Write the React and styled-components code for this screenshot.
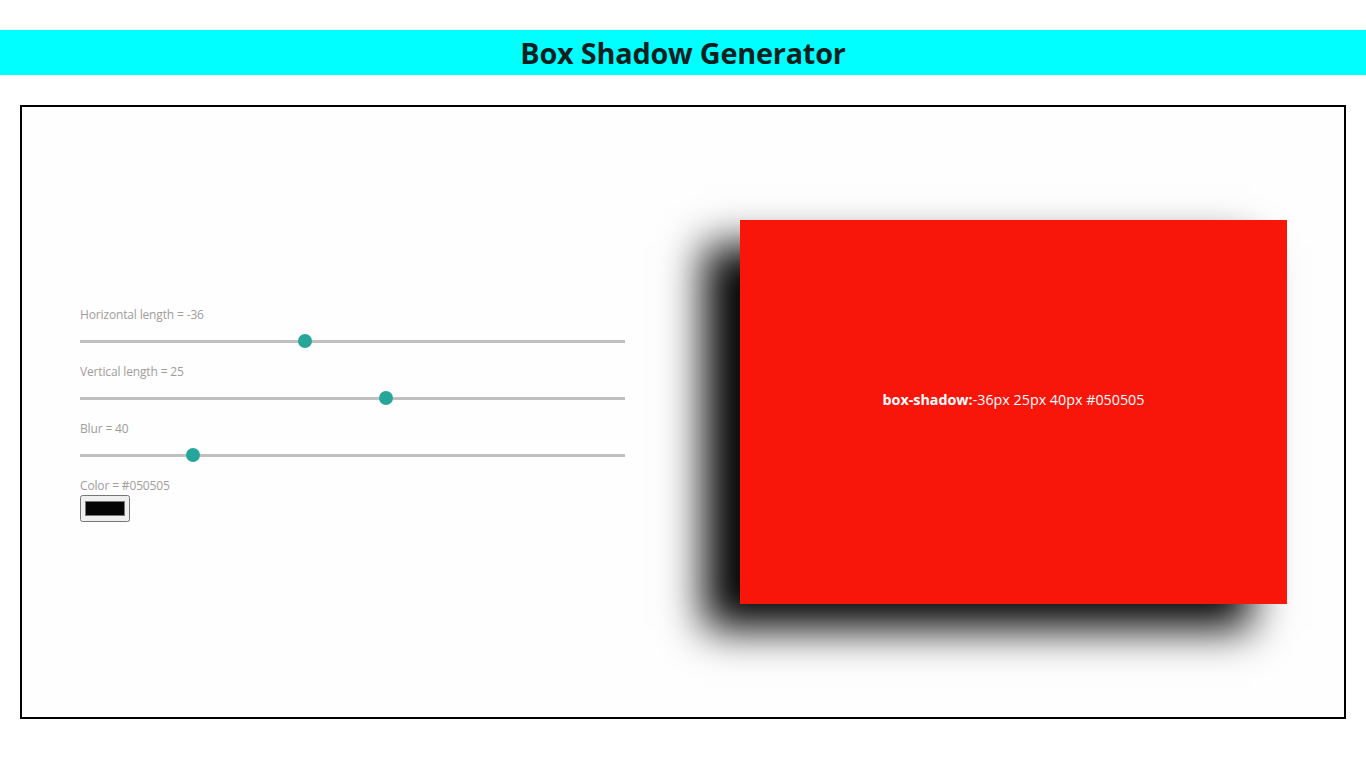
import React, { useState } from "react";
import styled, { createGlobalStyle } from "styled-components";

const Global = createGlobalStyle`
  html, body { margin: 0; padding: 0; background: #fff; }
  body { font-family: "Open Sans", "Noto Sans", sans-serif; }
  * { box-sizing: border-box; }
`;

const Page = styled.div`
  padding-top: 30px;
  display: flex;
  flex-direction: column;
  gap: 30px;
`;

const Header = styled.h1`
  margin: 0;
  height: 45px;
  background: #00ffff;
  color: #10201f;
  font-size: 28.8px;
  font-weight: 700;
  display: flex;
  align-items: center;
  justify-content: center;
  letter-spacing: -0.2px;
`;

const Frame = styled.div`
  margin: 0 20px;
  height: 614px;
  border: 2px solid #000;
  background: #fefefe;
  display: grid;
  grid-template-columns: 1fr 1fr;
  align-items: center;
`;

const Controls = styled.div`
  padding: 5px 58px 0 58px;
  display: flex;
  flex-direction: column;
`;

const Field = styled.div`
  display: flex;
  flex-direction: column;
  margin-bottom: ${(p) => (p.$last ? 0 : "7px")};
`;

const Label = styled.label`
  font-size: 12px;
  color: #a09d9b;
  line-height: 16px;
  letter-spacing: -0.15px;
`;

const Range = styled.input`
  -webkit-appearance: none;
  appearance: none;
  width: 545px;
  height: 14px;
  margin: 11px 0 9px;
  background: transparent;
  outline: none;

  &::-webkit-slider-runnable-track {
    height: 3px;
    background: #c0c0c0;
    border: none;
  }
  &::-webkit-slider-thumb {
    -webkit-appearance: none;
    width: 14px;
    height: 14px;
    border-radius: 50%;
    background: #26a69a;
    border: none;
    margin-top: -5.5px;
  }
`;

const ColorInput = styled.input`
  width: 50px;
  height: 27px;
  margin: 1px 0 0;
`;

const PreviewCol = styled.div`
  display: flex;
  justify-content: flex-end;
  padding-right: 57px;
`;

const Preview = styled.div`
  width: 547px;
  height: 384px;
  background: #f8160a;
  color: #fff;
  font-size: 14.3px;
  display: flex;
  align-items: center;
  justify-content: center;
  padding-bottom: 25px;
`;

export default function App() {
  const [h, setH] = useState(-36);
  const [v, setV] = useState(25);
  const [b, setB] = useState(40);
  const [c, setC] = useState("#050505");
  const shadow = `${h}px ${v}px ${b}px ${c}`;
  return (
    <>
      <Global />
      <Page>
        <Header>Box Shadow Generator</Header>
        <Frame>
          <Controls>
            <Field>
              <Label>Horizontal length = {h}</Label>
              <Range type="range" min={-200} max={200} value={h} onChange={(e) => setH(+e.target.value)} />
            </Field>
            <Field>
              <Label>Vertical length = {v}</Label>
              <Range type="range" min={-200} max={200} value={v} onChange={(e) => setV(+e.target.value)} />
            </Field>
            <Field>
              <Label>Blur = {b}</Label>
              <Range type="range" min={0} max={200} value={b} onChange={(e) => setB(+e.target.value)} />
            </Field>
            <Field $last>
              <Label>Color = {c}</Label>
              <ColorInput type="color" value={c} onChange={(e) => setC(e.target.value)} />
            </Field>
          </Controls>
          <PreviewCol>
            <Preview style={{ boxShadow: shadow }}>
              <b>box-shadow:</b>
              {shadow}
            </Preview>
          </PreviewCol>
        </Frame>
      </Page>
    </>
  );
}
